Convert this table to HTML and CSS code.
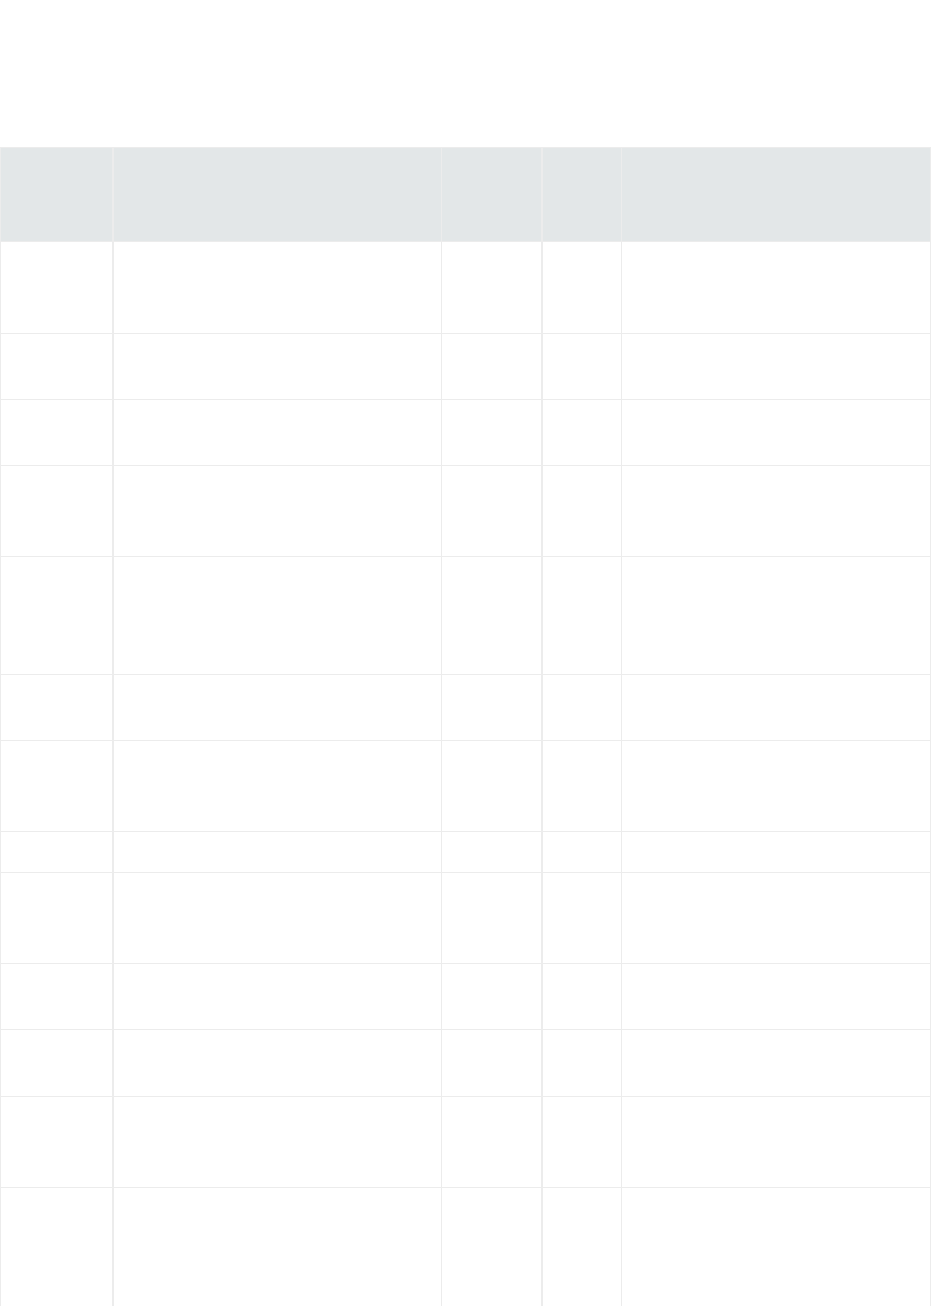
FILE: index.html
```html
<!DOCTYPE html>
<html lang="en">
<head>
  <meta charset="UTF-8" />
  <meta name="viewport" content="width=device-width, initial-scale=1.0"/>
  <title>Table</title>
  <link rel="stylesheet" href="styles.css">
</head>
<body>
  <div class="page">
    <div class="top-space"></div>
    <table class="grid">
      <colgroup>
        <col class="c1">
        <col class="c2">
        <col class="c3">
        <col class="c4">
        <col class="c5">
      </colgroup>
      <thead>
        <tr class="head">
          <th></th><th></th><th></th><th></th><th></th>
        </tr>
      </thead>
      <tbody>
        <tr class="r2b"><td></td><td></td><td></td><td></td><td></td></tr>
        <tr class="r1"><td></td><td></td><td></td><td></td><td></td></tr>
        <tr class="r1"><td></td><td></td><td></td><td></td><td></td></tr>
        <tr class="r2"><td></td><td></td><td></td><td></td><td></td></tr>
        <tr class="r3"><td></td><td></td><td></td><td></td><td></td></tr>
        <tr class="r1"><td></td><td></td><td></td><td></td><td></td></tr>
        <tr class="r2"><td></td><td></td><td></td><td></td><td></td></tr>
        <tr class="r0"><td></td><td></td><td></td><td></td><td></td></tr>
        <tr class="r2"><td></td><td></td><td></td><td></td><td></td></tr>
        <tr class="r1"><td></td><td></td><td></td><td></td><td></td></tr>
        <tr class="r1b"><td></td><td></td><td></td><td></td><td></td></tr>
        <tr class="r2"><td></td><td></td><td></td><td></td><td></td></tr>
        <tr class="r3 last"><td></td><td></td><td></td><td></td><td></td></tr>
      </tbody>
    </table>
  </div>
</body>
</html>
```

FILE: styles.css
```css
body {
  margin: 0;
  padding: 0;
  background: #fff;
  font-family: 'Open Sans', sans-serif;
  font-size: 14px;
  color: #333;
}

.page {
  width: 931px;
}

.top-space {
  height: 147px;
}

.grid {
  width: 930px;
  border-collapse: collapse;
  table-layout: fixed;
}

.c1 { width: 112px; }
.c2 { width: 329px; }
.c3 { width: 100px; }
.c4 { width: 80px; }
.c5 { width: 309px; }

.grid th,
.grid td {
  border: 1px solid #ececec;
  padding: 0;
}

.grid th {
  background: #e3e7e8;
}

.grid tr > :nth-child(1),
.grid tr > :nth-child(3) {
  border-right-width: 2px;
}

.head { height: 94px; }
.r0 { height: 41px; }
.r1 { height: 66px; }
.r1b { height: 67px; }
.r2 { height: 91px; }
.r2b { height: 92px; }
.r3 { height: 118px; }

.last td {
  border-bottom-color: transparent;
}
```
